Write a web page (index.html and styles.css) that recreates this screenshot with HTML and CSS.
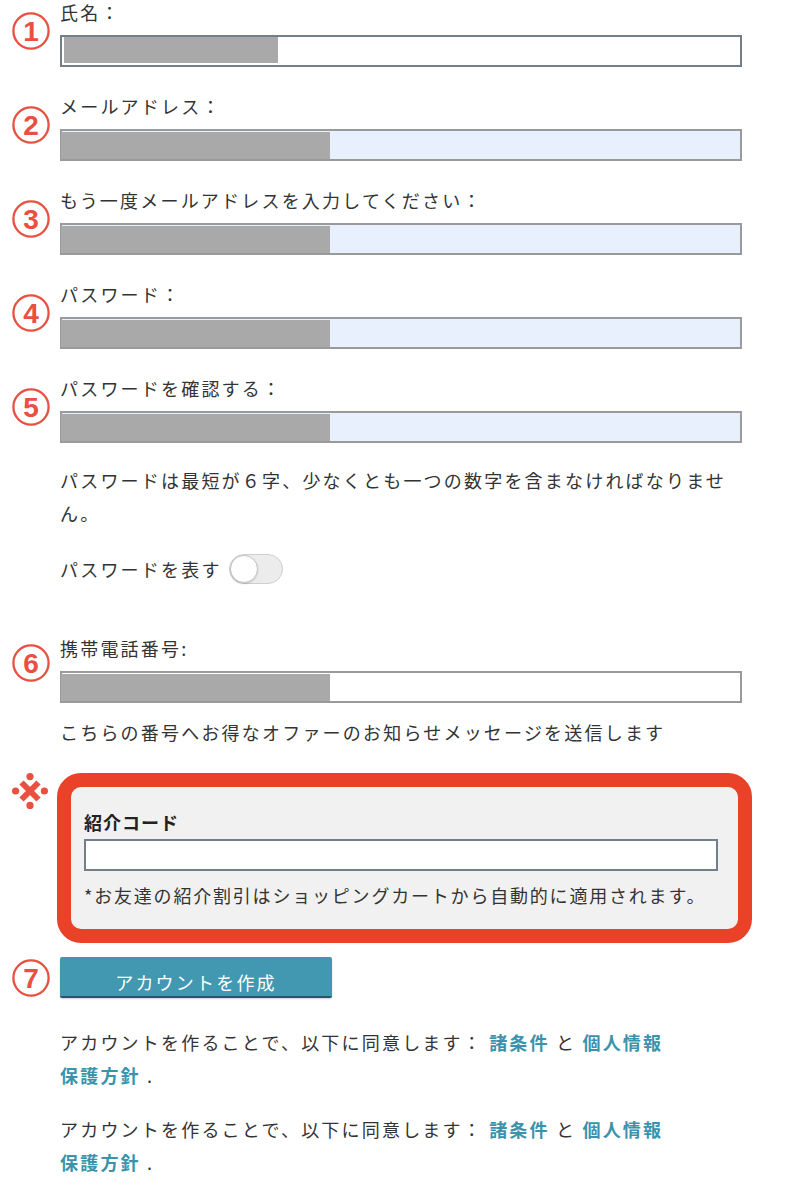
FILE: index.html
```html
<!DOCTYPE html>
<html lang="ja">
<head>
<meta charset="utf-8">
<title>アカウントを作成</title>
<link rel="stylesheet" href="styles.css">
</head>
<body>
<main class="form">
  <div class="row">
    <div class="mark"><svg class="num" viewBox="0 0 38 38" width="38" height="38"><circle cx="19" cy="19" r="17.6"/><text x="19" y="29">1</text></svg></div>
    <div class="body">
      <span class="label">氏名：</span>
      <div class="field name"><span class="redact"></span></div>
    </div>
  </div>
  <div class="row">
    <div class="mark"><svg class="num" viewBox="0 0 38 38" width="38" height="38"><circle cx="19" cy="19" r="17.6"/><text x="19" y="29">2</text></svg></div>
    <div class="body">
      <span class="label">メールアドレス：</span>
      <div class="field"><span class="redact"></span></div>
    </div>
  </div>
  <div class="row">
    <div class="mark"><svg class="num" viewBox="0 0 38 38" width="38" height="38"><circle cx="19" cy="19" r="17.6"/><text x="19" y="29">3</text></svg></div>
    <div class="body">
      <span class="label">もう一度メールアドレスを入力してください：</span>
      <div class="field"><span class="redact"></span></div>
    </div>
  </div>
  <div class="row">
    <div class="mark"><svg class="num" viewBox="0 0 38 38" width="38" height="38"><circle cx="19" cy="19" r="17.6"/><text x="19" y="29">4</text></svg></div>
    <div class="body">
      <span class="label">パスワード：</span>
      <div class="field"><span class="redact"></span></div>
    </div>
  </div>
  <div class="row row-pw2">
    <div class="mark"><svg class="num" viewBox="0 0 38 38" width="38" height="38"><circle cx="19" cy="19" r="17.6"/><text x="19" y="29">5</text></svg></div>
    <div class="body">
      <span class="label">パスワードを確認する：</span>
      <div class="field"><span class="redact"></span></div>
    </div>
  </div>

  <p class="hint">パスワードは最短が６字、少なくとも一つの数字を含まなければなりません。</p>

  <div class="toggle-row">
    <span>パスワードを表す</span>
    <span class="toggle"><span class="knob"></span></span>
  </div>

  <div class="row row-phone">
    <div class="mark mark-phone"><svg class="num" viewBox="0 0 38 38" width="38" height="38"><circle cx="19" cy="19" r="17.6"/><text x="19" y="29">6</text></svg></div>
    <div class="body">
      <span class="label">携帯電話番号:</span>
      <div class="field white"><span class="redact"></span></div>
    </div>
  </div>
  <p class="note">こちらの番号へお得なオファーのお知らせメッセージを送信します</p>

  <div class="ref-row">
    <div class="asterisk">
      <svg viewBox="0 0 36 36" width="36" height="36">
        <path class="x" d="M9.5 9.5 L26.5 26.5 M26.5 9.5 L9.5 26.5"/>
        <circle class="dot" cx="18" cy="3.6" r="3.6"/>
        <circle class="dot" cx="18" cy="32.4" r="3.6"/>
        <circle class="dot" cx="3.6" cy="18" r="3.6"/>
        <circle class="dot" cx="32.4" cy="18" r="3.6"/>
      </svg>
    </div>
    <div class="ref-box">
      <span class="ref-label">紹介コード</span>
      <div class="ref-input"></div>
      <p class="ref-note">*お友達の紹介割引はショッピングカートから自動的に適用されます。</p>
    </div>
  </div>

  <div class="row row-btn">
    <div class="mark mark-btn"><svg class="num" viewBox="0 0 38 38" width="38" height="38"><circle cx="19" cy="19" r="17.6"/><text x="19" y="29">7</text></svg></div>
    <div class="body">
      <button class="btn" type="button">アカウントを作成</button>
    </div>
  </div>

  <p class="terms">アカウントを作ることで、以下に同意します： <a href="#">諸条件</a> と <a href="#">個人情報保護方針</a> .</p>
  <p class="terms">アカウントを作ることで、以下に同意します： <a href="#">諸条件</a> と <a href="#">個人情報保護方針</a> .</p>
</main>
</body>
</html>
```

FILE: styles.css
```css
body {
  margin: 0;
  background: #fff;
  color: #333;
  font-family: "Noto Sans CJK JP", "Noto Sans", sans-serif;
  font-size: 18px;
  letter-spacing: 2.2px;
}

.form {
  width: 806px;
}

.row {
  display: grid;
  grid-template-columns: 60px 682px;
  margin-bottom: 27px;
}

.mark {
  padding: 12px 0 0 12px;
}

.num {
  display: block;
}

.num circle {
  fill: none;
  stroke: #e8503f;
  stroke-width: 2.3;
}

.num text {
  fill: #e8503f;
  font-family: "Liberation Sans", Arial, sans-serif;
  font-size: 28px;
  font-weight: 700;
  text-anchor: middle;
  letter-spacing: 0;
}

.label {
  display: block;
  line-height: 24px;
  margin-bottom: 11px;
}

.field {
  height: 32px;
  box-sizing: border-box;
  border: 2px solid #9a9a9a;
  background: #e8f0fe;
  padding-top: 1px;
}

.field .redact {
  display: block;
  width: 269px;
  height: 27px;
  margin-left: -1px;
  background: #a9a9a9;
}

.field.name {
  border-color: #737e8a;
  background: #fff;
  padding: 0 2px;
}

.field.name .redact {
  width: 214px;
  height: 26px;
  margin: 0;
}

.field.white {
  background: #fff;
}

.row-pw2 {
  margin-bottom: 21px;
}

.hint {
  margin: 0 0 24px;
  padding-left: 60px;
  width: 678px;
  line-height: 33px;
}

.toggle-row {
  display: flex;
  align-items: center;
  gap: 7px;
  padding-left: 60px;
  height: 30px;
  margin-bottom: 52px;
}

.toggle {
  display: flex;
  align-items: center;
  width: 54px;
  height: 30px;
  box-sizing: border-box;
  border: 1px solid #cfcfcf;
  border-radius: 15px;
  background: #ececec;
}

.knob {
  display: block;
  width: 28px;
  height: 28px;
  box-sizing: border-box;
  border: 1px solid #c4c4c4;
  border-radius: 50%;
  background: #fff;
  box-shadow: 0 1px 2px rgba(0, 0, 0, 0.15);
}

.row-phone {
  margin-bottom: 13px;
}

.mark-phone {
  padding-top: 8px;
}

.note {
  margin: 0 0 24px;
  padding-left: 60px;
  line-height: 33px;
}

.ref-row {
  display: grid;
  grid-template-columns: 57px 695px;
  margin-bottom: 14px;
}

.asterisk {
  padding-left: 12px;
}

.asterisk svg {
  display: block;
}

.asterisk .x {
  stroke: #e8503f;
  stroke-width: 6;
  fill: none;
}

.asterisk .dot {
  fill: #e8503f;
}

.ref-box {
  border: 14px solid #ea4229;
  border-radius: 24px;
  background: #f1f1f1;
  padding: 23px 8px 22px 13px;
}

.ref-label {
  display: block;
  font-weight: 700;
  line-height: 24px;
  margin-bottom: 5px;
  color: #222;
  letter-spacing: 1px;
}

.ref-input {
  width: 634px;
  height: 32px;
  box-sizing: border-box;
  border: 2px solid #737e8a;
  background: #fff;
  margin-bottom: 12px;
}

.ref-note {
  margin: 0;
  line-height: 24px;
  white-space: nowrap;
  letter-spacing: 1.8px;
}

.row-btn {
  margin-bottom: 28px;
}

.mark-btn {
  padding-top: 2px;
}

.btn {
  display: block;
  width: 272px;
  padding: 13px 0 2px;
  border: 0;
  border-bottom: 2px solid #1f5a6a;
  border-radius: 2px;
  background: #4298b0;
  color: #fff;
  font-family: inherit;
  font-size: 18px;
  letter-spacing: 2.2px;
  line-height: 24px;
  text-align: center;
  box-shadow: 0 1px 2px rgba(0, 0, 0, 0.2);
}

.terms {
  margin: 0 0 21px;
  padding-left: 60px;
  width: 612px;
  line-height: 33px;
}

.terms a {
  color: #3b93ab;
  font-weight: 700;
  text-decoration: none;
}
```
